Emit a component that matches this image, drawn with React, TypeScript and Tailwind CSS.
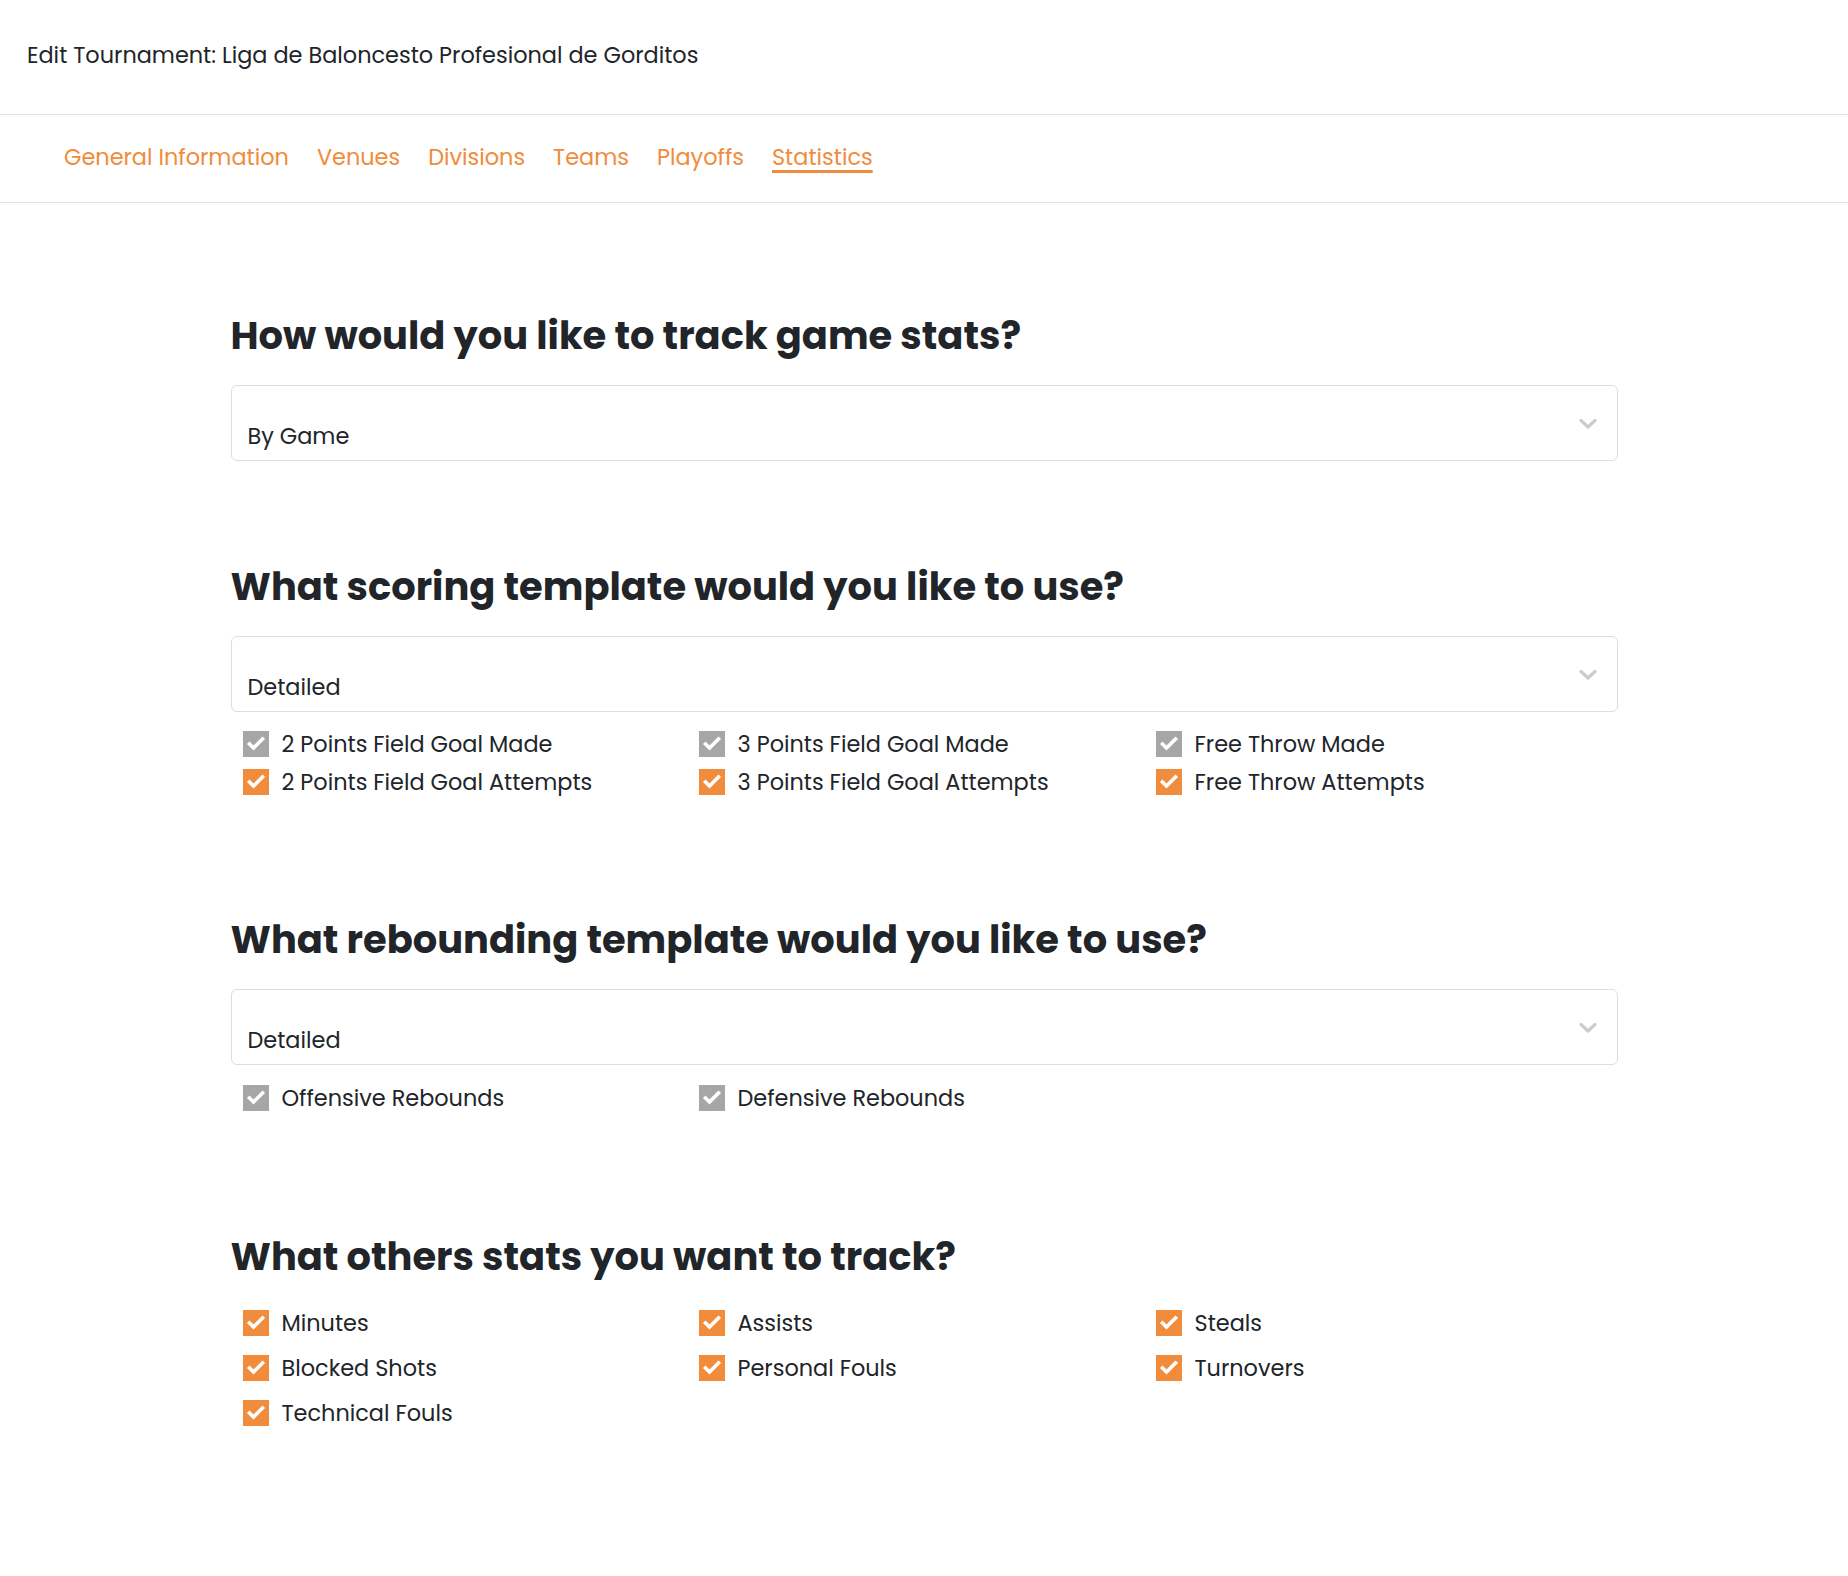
import React from "react";

const ORANGE = "#f08c3c";

function Check({ on }: { on: boolean }) {
  return (
    <span
      className={
        "flex h-[26px] w-[26px] shrink-0 items-center justify-center " +
        (on ? "bg-[#f08c3c]" : "bg-[#a6a6a6]")
      }
    >
      <svg width="26" height="26" viewBox="0 0 26 26">
        <polyline
          points="6.5,13 10.5,17 19.5,8"
          fill="none"
          stroke="#ffffff"
          strokeWidth="3.6"
          strokeLinecap="square"
          strokeLinejoin="miter"
        />
      </svg>
    </span>
  );
}

function Select({ value }: { value: string }) {
  return (
    <div className="relative flex h-[76px] items-end rounded-[6px] border border-[#dddddd] bg-white px-4 pb-[10px]">
      <span className="text-[22.4px] leading-[28px] text-[#212529]">{value}</span>
      <svg
        className="absolute right-[20px] top-[32px]"
        width="18"
        height="12"
        viewBox="0 0 18 12"
      >
        <polyline
          points="2,2.5 9,9 16,2.5"
          fill="none"
          stroke="#cccccc"
          strokeWidth="3.2"
          strokeLinecap="round"
          strokeLinejoin="round"
        />
      </svg>
    </div>
  );
}

function Item({ label, on }: { label: string; on: boolean }) {
  return (
    <div className="flex h-[26px] items-center gap-[13px]">
      <Check on={on} />
      <span className="text-[22.4px] leading-[26px] text-[#212529]">{label}</span>
    </div>
  );
}

function Grid({ items, rowGap }: { items: [string, boolean][]; rowGap: string }) {
  return (
    <div className={"grid grid-cols-[456px_457px_457px] pl-[12px] " + rowGap}>
      {items.map(([l, o]) => (
        <Item key={l} label={l} on={o} />
      ))}
    </div>
  );
}

function Heading({ children }: { children: React.ReactNode }) {
  return (
    <h2 className="text-[38.4px] font-bold leading-[46px] text-[#212529]">
      {children}
    </h2>
  );
}

export default function App() {
  const tabs = ["General Information", "Venues", "Divisions", "Teams", "Playoffs", "Statistics"];
  return (
    <div
      className="min-h-[1576px] bg-white text-[#212529]"
      style={{ fontFamily: "Poppins, Inter, 'Noto Sans', sans-serif" }}
    >
      <header className="flex h-[115px] items-center border-b border-[#e0e0e0] px-[27px] pb-[4px]">
        <span className="text-[22.4px] leading-[28px] text-[#212529]">
          Edit Tournament: Liga de Baloncesto Profesional de Gorditos
        </span>
      </header>
      <nav className="flex h-[88px] items-center gap-[28px] border-b border-[#e0e0e0] px-[64px] pb-[3px]">
        {tabs.map((t) => (
          <span
            key={t}
            className={
              "relative text-[22.4px] leading-[28px] text-[#f08c3c] " +
              (t === "Statistics" ? "underline decoration-[#f08c3c] decoration-[3px] underline-offset-[5px]" : "")
            }
            style={{ color: ORANGE }}
          >
            {t}
          </span>
        ))}
      </nav>
      <main className="mx-auto w-[1387px] pt-[110px] pb-[120px]">
        <Heading>How would you like to track game stats?</Heading>
        <div className="mt-[26px]">
          <Select value="By Game" />
        </div>

        <div className="mt-[103px]">
          <Heading>What scoring template would you like to use?</Heading>
        </div>
        <div className="mt-[26px]">
          <Select value="Detailed" />
        </div>
        <div className="mt-[19px]">
          <Grid
            rowGap="gap-y-[12px]"
            items={[
              ["2 Points Field Goal Made", false],
              ["3 Points Field Goal Made", false],
              ["Free Throw Made", false],
              ["2 Points Field Goal Attempts", true],
              ["3 Points Field Goal Attempts", true],
              ["Free Throw Attempts", true],
            ]}
          />
        </div>

        <div className="mt-[122px]">
          <Heading>What rebounding template would you like to use?</Heading>
        </div>
        <div className="mt-[26px]">
          <Select value="Detailed" />
        </div>
        <div className="mt-[20px]">
          <Grid
            rowGap="gap-y-[12px]"
            items={[
              ["Offensive Rebounds", false],
              ["Defensive Rebounds", false],
            ]}
          />
        </div>

        <div className="mt-[123px]">
          <Heading>What others stats you want to track?</Heading>
        </div>
        <div className="mt-[30px]">
          <Grid
            rowGap="gap-y-[19px]"
            items={[
              ["Minutes", true],
              ["Assists", true],
              ["Steals", true],
              ["Blocked Shots", true],
              ["Personal Fouls", true],
              ["Turnovers", true],
              ["Technical Fouls", true],
            ]}
          />
        </div>
      </main>
    </div>
  );
}
